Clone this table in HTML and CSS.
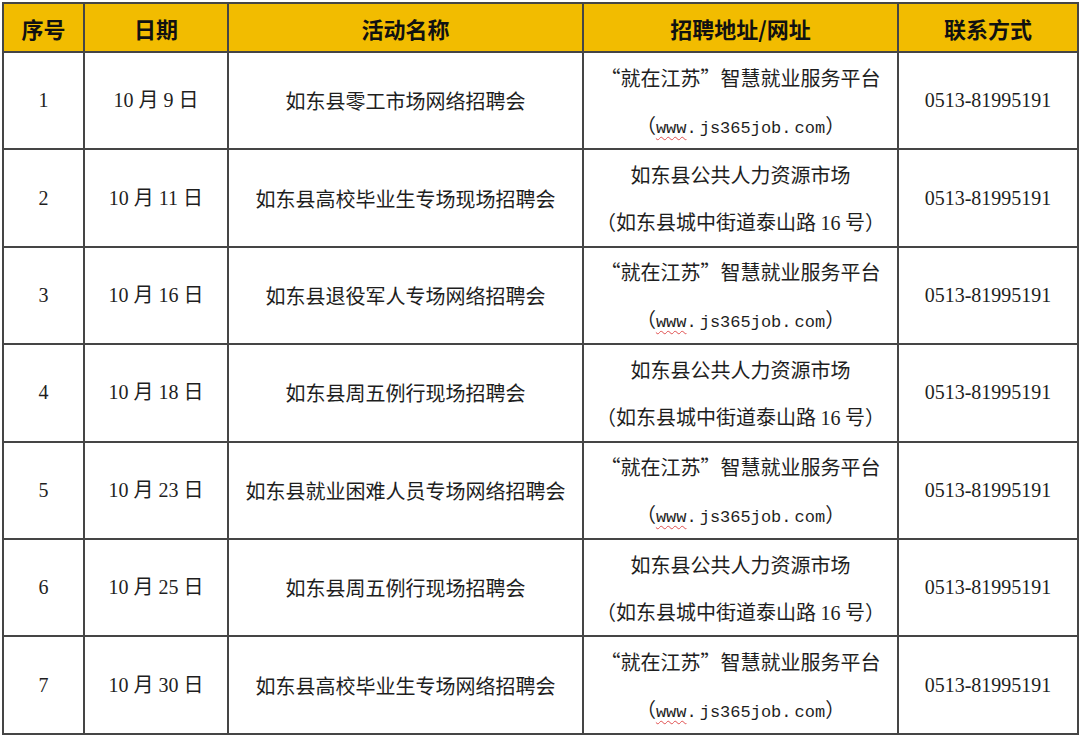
FILE: index.html
```html
<!DOCTYPE html>
<html lang="zh-CN">
<head>
<meta charset="utf-8">
<title>招聘会安排</title>
<link rel="stylesheet" href="styles.css">
</head>
<body>
<table class="sched">
  <colgroup>
    <col class="c1"><col class="c2"><col class="c3"><col class="c4"><col class="c5">
  </colgroup>
  <thead>
    <tr><th>序号</th><th>日期</th><th>活动名称</th><th>招聘地址/网址</th><th>联系方式</th></tr>
  </thead>
  <tbody>
    <tr>
      <td class="num">1</td><td class="num">10 月 9 日</td><td>如东县零工市场网络招聘会</td>
      <td><div class="ln"><span class="q">“</span>就在江苏<span class="q">”</span>智慧就业服务平台</div><div class="ln">（<span class="url"><span class="sp">www</span>.<span class="gap"></span>js365job.<span class="gap"></span>com</span>）</div></td>
      <td class="num">0513-81995191</td>
    </tr>
    <tr>
      <td class="num">2</td><td class="num">10 月 11 日</td><td>如东县高校毕业生专场现场招聘会</td>
      <td><div class="ln">如东县公共人力资源市场</div><div class="ln">（如东县城中街道泰山路 <span class="num">16</span> 号）</div></td>
      <td class="num">0513-81995191</td>
    </tr>
    <tr>
      <td class="num">3</td><td class="num">10 月 16 日</td><td>如东县退役军人专场网络招聘会</td>
      <td><div class="ln"><span class="q">“</span>就在江苏<span class="q">”</span>智慧就业服务平台</div><div class="ln">（<span class="url"><span class="sp">www</span>.<span class="gap"></span>js365job.<span class="gap"></span>com</span>）</div></td>
      <td class="num">0513-81995191</td>
    </tr>
    <tr>
      <td class="num">4</td><td class="num">10 月 18 日</td><td>如东县周五例行现场招聘会</td>
      <td><div class="ln">如东县公共人力资源市场</div><div class="ln">（如东县城中街道泰山路 <span class="num">16</span> 号）</div></td>
      <td class="num">0513-81995191</td>
    </tr>
    <tr>
      <td class="num">5</td><td class="num">10 月 23 日</td><td>如东县就业困难人员专场网络招聘会</td>
      <td><div class="ln"><span class="q">“</span>就在江苏<span class="q">”</span>智慧就业服务平台</div><div class="ln">（<span class="url"><span class="sp">www</span>.<span class="gap"></span>js365job.<span class="gap"></span>com</span>）</div></td>
      <td class="num">0513-81995191</td>
    </tr>
    <tr>
      <td class="num">6</td><td class="num">10 月 25 日</td><td>如东县周五例行现场招聘会</td>
      <td><div class="ln">如东县公共人力资源市场</div><div class="ln">（如东县城中街道泰山路 <span class="num">16</span> 号）</div></td>
      <td class="num">0513-81995191</td>
    </tr>
    <tr>
      <td class="num">7</td><td class="num">10 月 30 日</td><td>如东县高校毕业生专场网络招聘会</td>
      <td><div class="ln"><span class="q">“</span>就在江苏<span class="q">”</span>智慧就业服务平台</div><div class="ln">（<span class="url"><span class="sp">www</span>.<span class="gap"></span>js365job.<span class="gap"></span>com</span>）</div></td>
      <td class="num">0513-81995191</td>
    </tr>
  </tbody>
</table>
</body>
</html>
```

FILE: styles.css
```css
html, body {
  margin: 0;
  padding: 0;
  background: #ffffff;
}
body {
  padding: 2px 0 0 2px;
}
.sched {
  border-collapse: collapse;
  table-layout: fixed;
  width: 1075px;
  color: #1e1e1e;
  font-family: "Noto Sans CJK SC", "Liberation Serif", serif;
  font-size: 20px;
}
.c1 { width: 81px; }
.c2 { width: 144px; }
.c3 { width: 355px; }
.c4 { width: 315px; }
.c5 { width: 180px; }
.sched th, .sched td {
  border: 2px solid #454545;
  text-align: center;
  vertical-align: middle;
  padding: 0;
}
.sched th {
  background: #f2bc00;
  height: 47px;
  font-family: "Noto Sans CJK SC", "Noto Sans", sans-serif;
  font-weight: 700;
  font-size: 22px;
  color: #111;
  line-height: 46px;
}
.sched td {
  height: 95.4px;
  font-weight: 400;
  line-height: 47px;
}
.ln {
  line-height: 47px;
  height: 47px;
}
.num {
  font-family: "Liberation Serif", serif;
}
.sched td.num {
  font-family: "Liberation Serif", "Noto Sans CJK SC", serif;
}
.q {
  display: inline-block;
  width: 1em;
  text-align: right;
}
.ln .q:nth-of-type(2) {
  text-align: left;
}
.url {
  font-family: "Liberation Mono", monospace;
  font-size: 17px;
  white-space: nowrap;
}
.gap {
  display: inline-block;
  width: 3px;
}
.sp {
  text-decoration: underline wavy #e05050;
  text-decoration-thickness: 1px;
  text-underline-offset: 3px;
}
```
